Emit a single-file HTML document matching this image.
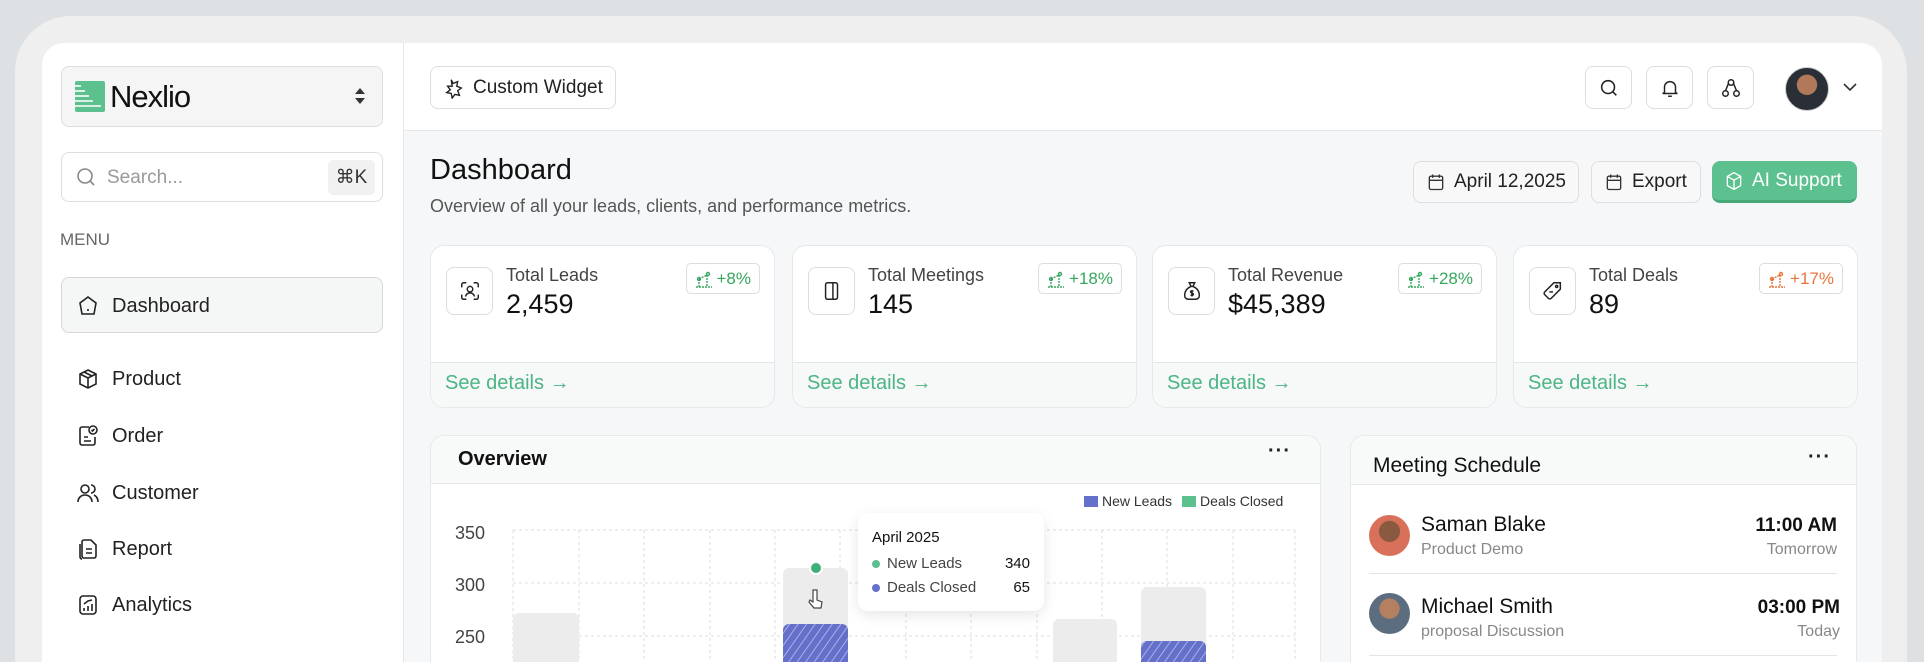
<!DOCTYPE html>
<html><head><meta charset="utf-8">
<style>
*{box-sizing:border-box;margin:0;padding:0}
html,body{width:1924px;height:662px;overflow:hidden}
body{background:#dde1e4;font-family:"Liberation Sans",Arial,sans-serif;color:#1a1a1a}
#w{position:relative;width:1924px;height:662px;overflow:hidden}
.a{position:absolute}
.frame{left:15px;top:16px;width:1892px;height:646px;background:#efefef;border-radius:56px 56px 0 0}
.panel{left:42px;top:43px;width:1840px;height:619px;background:#f6f7f8;border-radius:22px 22px 0 0;overflow:hidden}
.side{left:42px;top:43px;width:362px;height:619px;background:#fff;border-right:1px solid #e6e6e6;border-top-left-radius:22px}
.top{left:404px;top:43px;width:1478px;height:88px;background:#fff;border-bottom:1px solid #e8e8e8;border-top-right-radius:22px}
.box{border:1px solid #dedede;border-radius:8px;background:#fff}
.nav{left:76px;font-size:20px;color:#222;display:flex;align-items:center;gap:12px}
.nav svg{width:24px;height:24px}
.card{background:#fff;border:1px solid #e8e8e8;border-bottom:none;border-radius:14px 14px 0 0}
.ib{width:47px;height:43px;display:flex;align-items:center;justify-content:center}
.btn{height:42px;display:flex;align-items:center;gap:8px;padding:0 12px;font-size:19px;color:#222}
.stat{top:245px;width:345px;height:163px;background:#fff;border:1px solid #e8e8e8;border-radius:14px;overflow:hidden}
.stat .ic{left:15px;top:21px;width:47px;height:48px;border:1px solid #ddd;border-radius:8px;display:flex;align-items:center;justify-content:center}
.stat .t{left:75px;top:19px;font-size:18px;color:#444}
.stat .v{left:75px;top:43px;font-size:27px;color:#111}
.stat .bd{right:14px;top:17px;height:31px;padding:0 8px;border:1px solid #ddd;border-radius:5px;font-size:17px;display:flex;align-items:center;gap:4px}
.stat .ft{left:0;top:116px;width:100%;height:47px;background:#f7f8f8;border-top:1px solid #e6e6e6;color:#4bb585;font-size:20px;padding:9px 14px}
.g{color:#37a65f}.o{color:#e8743b}
</style></head><body><div id="w">
<div class="a frame"></div>
<div class="a panel"></div>
<div class="a side"></div>
<div class="a top"></div>

<div class="a box" style="left:61px;top:66px;width:322px;height:61px;background:#f5f5f5"></div>
<svg class="a" style="left:75px;top:81px" width="30" height="31" viewBox="0 0 30 31"><rect width="30" height="31" rx="2" fill="#5cc08f"/><g stroke="#fff" stroke-width="1.6"><line x1="0" y1="5" x2="6" y2="5"/><line x1="0" y1="10" x2="10" y2="10"/><line x1="0" y1="15" x2="14" y2="15"/><line x1="0" y1="20" x2="18" y2="20"/><line x1="0" y1="25" x2="26" y2="25"/></g></svg>
<div class="a" style="left:110px;top:79px;font-size:31px;letter-spacing:-1px;color:#111">Nexlio</div>
<svg class="a" style="left:354px;top:87px" width="12" height="18" viewBox="0 0 12 18"><path d="M6 1L11 7H1z M6 17L11 11H1z" fill="#333"/></svg>

<div class="a box" style="left:61px;top:152px;width:322px;height:50px"></div>
<svg class="a" style="left:76px;top:167px" width="20" height="20" viewBox="0 0 20 20" fill="none" stroke="#888" stroke-width="1.6"><circle cx="9" cy="9" r="7"/><path d="M14 14l4 4"/></svg>
<div class="a" style="left:107px;top:167px;font-size:19px;color:#999">Search...</div>
<div class="a" style="left:328px;top:160px;width:47px;height:35px;background:#f1f1f1;border-radius:5px;font-size:19px;color:#333;display:flex;align-items:center;justify-content:center">⌘K</div>
<div class="a" style="left:60px;top:230px;font-size:17px;color:#666">MENU</div>

<div class="a box" style="left:61px;top:277px;width:322px;height:56px;background:#f5f6f6;border-color:#d8d8d8"></div>
<div class="a nav" style="top:294px"><svg viewBox="0 0 24 24" fill="none" stroke="#222" stroke-width="1.6"><path d="M12 3l8 6-2 11H6L4 9z"/><path d="M11 16h2"/></svg>Dashboard</div>
<div class="a nav" style="top:367px"><svg viewBox="0 0 24 24" fill="none" stroke="#222" stroke-width="1.6"><path d="M12 3l8 4v10l-8 4-8-4V7z"/><path d="M4 7l8 4 8-4M12 11v10M8 5l8 4"/></svg>Product</div>
<div class="a nav" style="top:424px"><svg viewBox="0 0 24 24" fill="none" stroke="#222" stroke-width="1.6"><path d="M13 3H6a2 2 0 00-2 2v14a2 2 0 002 2h11a2 2 0 002-2v-6"/><circle cx="17" cy="6" r="4"/><path d="M15.5 6l1 1 2-2M8 13h4M8 17h7"/></svg>Order</div>
<div class="a nav" style="top:481px"><svg viewBox="0 0 24 24" fill="none" stroke="#222" stroke-width="1.6"><circle cx="9" cy="8" r="4"/><path d="M2 21c0-4 3-7 7-7s7 3 7 7M15 4a4 4 0 010 8M18 14c2 1 4 3 4 7"/></svg>Customer</div>
<div class="a nav" style="top:537px"><svg viewBox="0 0 24 24" fill="none" stroke="#222" stroke-width="1.6"><path d="M8 3h7l5 5v11a2 2 0 01-2 2H8a2 2 0 01-2-2V5a2 2 0 012-2z"/><path d="M4 7v13a2 2 0 002 2M10 12h6M10 16h6"/></svg>Report</div>
<div class="a nav" style="top:593px"><svg viewBox="0 0 24 24" fill="none" stroke="#222" stroke-width="1.6"><rect x="4" y="3" width="16" height="18" rx="3"/><path d="M8 18v-3M12 18v-5M16 18v-7M8 11l4-3 4-1"/></svg>Analytics</div>

<div class="a box btn" style="left:430px;top:66px;height:43px;width:186px"><svg width="22" height="22" viewBox="0 0 24 24" fill="none" stroke="#222" stroke-width="1.5"><path d="M9 3l2 4 5-2-1 5 5 2-4 3 2 5-5-1-3 4-1-5-5-1 4-3-3-4 5 0z"/></svg>Custom Widget</div>
<div class="a box ib" style="left:1585px;top:66px"><svg width="22" height="22" viewBox="0 0 24 24" fill="none" stroke="#222" stroke-width="1.7"><circle cx="11" cy="11" r="7"/><path d="M16 16l4 4"/></svg></div>
<div class="a box ib" style="left:1646px;top:66px"><svg width="22" height="22" viewBox="0 0 24 24" fill="none" stroke="#222" stroke-width="1.6"><path d="M6 17V11a6 6 0 0112 0v6l2 1H4z"/><path d="M10 21h4"/></svg></div>
<div class="a box ib" style="left:1707px;top:66px"><svg width="22" height="22" viewBox="0 0 24 24" fill="none" stroke="#222" stroke-width="1.6"><circle cx="12" cy="6" r="3"/><circle cx="6" cy="18" r="3"/><circle cx="18" cy="18" r="3"/><path d="M9.5 6.5L6 15M14.5 6.5L18 15"/></svg></div>
<div class="a" style="left:1785px;top:67px;width:44px;height:44px;border-radius:50%;background:radial-gradient(circle at 50% 40%,#b07a5a 0 30%,#2a2e36 32%);border:1px solid #ccc"></div>
<svg class="a" style="left:1842px;top:82px" width="16" height="10" viewBox="0 0 16 10" fill="none" stroke="#333" stroke-width="1.6"><path d="M2 2l6 6 6-6"/></svg>

<div class="a" style="left:430px;top:154px;font-size:29px;color:#111">Dashboard</div>
<div class="a" style="left:430px;top:196px;font-size:18px;color:#555">Overview of all your leads, clients, and performance metrics.</div>
<div class="a box btn" style="left:1413px;top:161px;width:166px;background:#f8f8f8"><svg width="20" height="20" viewBox="0 0 24 24" fill="none" stroke="#333" stroke-width="1.6"><rect x="4" y="5" width="16" height="16" rx="2"/><path d="M8 3v4M16 3v4M4 10h16M9 14h.01M12 14h.01M15 14h.01M9 17h.01M12 17h.01"/></svg>April 12,2025</div>
<div class="a box btn" style="left:1591px;top:161px;width:110px;background:#f8f8f8"><svg width="20" height="20" viewBox="0 0 24 24" fill="none" stroke="#333" stroke-width="1.6"><rect x="4" y="5" width="16" height="16" rx="2"/><path d="M8 3v4M16 3v4M4 10h16M9 14h.01M12 14h.01M15 14h.01M9 17h.01M12 17h.01"/></svg>Export</div>
<div class="a btn" style="left:1712px;top:161px;width:145px;background:#5cc08f;border-radius:8px;border-bottom:3px solid #47a878;color:#fff"><svg width="20" height="20" viewBox="0 0 24 24" fill="none" stroke="#fff" stroke-width="1.6"><path d="M12 2l8 4.5v11L12 22l-8-4.5v-11z"/><path d="M4 6.5l8 4.5 8-4.5M12 11v11"/></svg>AI Support</div>

<div class="a stat" style="left:430px"><div class="a ic"><svg width="22" height="22" viewBox="0 0 24 24" fill="none" stroke="#222" stroke-width="1.6"><path d="M3 8V5a2 2 0 012-2h3M16 3h3a2 2 0 012 2v3M21 16v3a2 2 0 01-2 2h-3M8 21H5a2 2 0 01-2-2v-3"/><circle cx="12" cy="10" r="3"/><path d="M7 18c1-3 3-4 5-4s4 1 5 4"/></svg></div><div class="a t">Total Leads</div><div class="a v">2,459</div><div class="a bd g"><svg width="18" height="18" viewBox="0 0 18 18" fill="none" stroke="#37a65f" stroke-width="1.4"><path d="M1 17h16M4 9l8-4M4 9v8M12 5v12" stroke-dasharray="2 1"/><circle cx="4" cy="9" r="1.5"/><circle cx="13" cy="4" r="1.5"/></svg>+8%</div><div class="a ft">See details →</div></div>
<div class="a stat" style="left:792px"><div class="a ic"><svg width="22" height="22" viewBox="0 0 24 24" fill="none" stroke="#222" stroke-width="1.6"><rect x="5" y="3" width="13" height="18" rx="2"/><path d="M13 3v18M10 12h.01"/></svg></div><div class="a t">Total Meetings</div><div class="a v">145</div><div class="a bd g"><svg width="18" height="18" viewBox="0 0 18 18" fill="none" stroke="#37a65f" stroke-width="1.4"><path d="M1 17h16M4 9l8-4M4 9v8M12 5v12" stroke-dasharray="2 1"/><circle cx="4" cy="9" r="1.5"/><circle cx="13" cy="4" r="1.5"/></svg>+18%</div><div class="a ft">See details →</div></div>
<div class="a stat" style="left:1152px"><div class="a ic"><svg width="22" height="22" viewBox="0 0 24 24" fill="none" stroke="#222" stroke-width="1.6"><path d="M9 3h6l-2 4h-2z"/><path d="M11 7c-5 2-7 6-7 10a4 4 0 004 4h8a4 4 0 004-4c0-4-2-8-7-10"/><path d="M13.5 12.5c-.5-1-3-1-3 .5s3 1 3 2.5-2.5 1.5-3 .5M12 11v7"/></svg></div><div class="a t">Total Revenue</div><div class="a v">$45,389</div><div class="a bd g"><svg width="18" height="18" viewBox="0 0 18 18" fill="none" stroke="#37a65f" stroke-width="1.4"><path d="M1 17h16M4 9l8-4M4 9v8M12 5v12" stroke-dasharray="2 1"/><circle cx="4" cy="9" r="1.5"/><circle cx="13" cy="4" r="1.5"/></svg>+28%</div><div class="a ft">See details →</div></div>
<div class="a stat" style="left:1513px"><div class="a ic"><svg width="22" height="22" viewBox="0 0 24 24" fill="none" stroke="#222" stroke-width="1.6"><path d="M13 3h7v7L10 20a2 2 0 01-3 0l-4-4a2 2 0 010-3z"/><circle cx="16" cy="7" r="1.2"/><path d="M8 13l4 0"/></svg></div><div class="a t">Total Deals</div><div class="a v">89</div><div class="a bd o"><svg width="18" height="18" viewBox="0 0 18 18" fill="none" stroke="#e8743b" stroke-width="1.4"><path d="M1 17h16M4 9l8-4M4 9v8M12 5v12" stroke-dasharray="2 1"/><circle cx="4" cy="9" r="1.5"/><circle cx="13" cy="4" r="1.5"/></svg>+17%</div><div class="a ft">See details →</div></div>

<div class="a card" style="left:430px;top:435px;width:891px;height:227px;overflow:hidden">
 <div style="height:48px;background:#f8f9f9;border-bottom:1px solid #e8e8e8"></div>
</div>
<div class="a" style="left:458px;top:448px;font-size:20px;font-weight:bold;color:#111">Overview</div>
<div class="a" style="left:1268px;top:440px;font-size:20px;letter-spacing:1px;color:#222;font-weight:bold">···</div>
<div class="a" style="left:1084px;top:493px;font-size:14px;color:#333;display:flex;align-items:center;gap:4px"><span style="width:14px;height:11px;background:#6470c9;display:inline-block"></span>New Leads<span style="width:14px;height:11px;background:#5cc08f;display:inline-block;margin-left:6px"></span>Deals Closed</div>
<svg class="a" style="left:440px;top:500px" width="870" height="162">
 <defs><pattern id="h" width="7" height="7" patternUnits="userSpaceOnUse" patternTransform="rotate(35)"><rect width="7" height="7" fill="#6470c9"/><line x1="0" y1="0" x2="0" y2="7" stroke="#aab0e6" stroke-width="2"/></pattern></defs>
 <g stroke="#dcdcdc" stroke-dasharray="3 3">
  <line x1="73" y1="30" x2="855" y2="30"/><line x1="73" y1="83" x2="855" y2="83"/><line x1="73" y1="136" x2="855" y2="136"/>
  <line x1="73" y1="30" x2="73" y2="170"/><line x1="139" y1="30" x2="139" y2="170"/><line x1="204" y1="30" x2="204" y2="170"/><line x1="270" y1="30" x2="270" y2="170"/><line x1="335" y1="30" x2="335" y2="170"/><line x1="400" y1="30" x2="400" y2="170"/><line x1="466" y1="30" x2="466" y2="170"/><line x1="531" y1="30" x2="531" y2="170"/><line x1="597" y1="30" x2="597" y2="170"/><line x1="662" y1="30" x2="662" y2="170"/><line x1="727" y1="30" x2="727" y2="170"/><line x1="793" y1="30" x2="793" y2="170"/><line x1="855" y1="30" x2="855" y2="170"/>
 </g>
 <rect x="73" y="113" width="66" height="70" rx="6" fill="#ececec"/>
 <rect x="343" y="68" width="65" height="110" rx="6" fill="#ececec"/>
 <rect x="343" y="124" width="65" height="60" rx="6" fill="url(#h)"/>
 <rect x="613" y="119" width="64" height="60" rx="6" fill="#ececec"/>
 <rect x="701" y="87" width="65" height="90" rx="6" fill="#ececec"/>
 <rect x="701" y="141" width="65" height="40" rx="6" fill="url(#h)"/>
 <circle cx="376" cy="68" r="6" fill="#3fae7a" stroke="#fff" stroke-width="2"/>
 <path d="M373 90v12l-3-2-1 2 5 6h7l1-6-5-2v-10z" fill="#fff" stroke="#444" stroke-width="1.2"/>
</svg>
<div class="a" style="left:455px;top:523px;font-size:18px;color:#444">350</div>
<div class="a" style="left:455px;top:575px;font-size:18px;color:#444">300</div>
<div class="a" style="left:455px;top:627px;font-size:18px;color:#444">250</div>
<div class="a" style="left:858px;top:513px;width:186px;height:98px;background:#fff;border-radius:10px;box-shadow:0 4px 14px rgba(0,0,0,.1)">
 <div class="a" style="left:14px;top:16px;font-size:15px;color:#111">April 2025</div>
 <div class="a" style="left:14px;top:42px;font-size:15px;color:#444;display:flex;align-items:center;gap:7px"><span style="width:8px;height:8px;border-radius:50%;background:#5cc08f"></span>New Leads</div>
 <div class="a" style="right:14px;top:42px;font-size:15px;color:#111">340</div>
 <div class="a" style="left:14px;top:66px;font-size:15px;color:#444;display:flex;align-items:center;gap:7px"><span style="width:8px;height:8px;border-radius:50%;background:#6470c9"></span>Deals Closed</div>
 <div class="a" style="right:14px;top:66px;font-size:15px;color:#111">65</div>
</div>

<div class="a card" style="left:1350px;top:435px;width:507px;height:227px;overflow:hidden">
 <div style="height:49px;background:#f8f9f9;border-bottom:1px solid #e8e8e8"></div>
</div>
<div class="a" style="left:1373px;top:454px;font-size:21px;color:#111">Meeting Schedule</div>
<div class="a" style="left:1808px;top:446px;font-size:20px;letter-spacing:1px;color:#222;font-weight:bold">···</div>
<div class="a" style="left:1369px;top:515px;width:41px;height:41px;border-radius:50%;background:radial-gradient(circle at 50% 40%,#8a5a40 0 32%,#d8705a 34%)"></div>
<div class="a" style="left:1421px;top:513px;font-size:21px;color:#111">Saman Blake</div>
<div class="a" style="left:1421px;top:541px;font-size:16px;color:#888">Product Demo</div>
<div class="a" style="right:87px;top:515px;font-size:19px;font-weight:bold;color:#111">11:00 AM</div>
<div class="a" style="right:87px;top:541px;font-size:16px;color:#888">Tomorrow</div>
<div class="a" style="left:1369px;top:573px;width:468px;height:1px;background:#e4e4e4"></div>
<div class="a" style="left:1369px;top:593px;width:41px;height:41px;border-radius:50%;background:radial-gradient(circle at 50% 38%,#b48060 0 30%,#5d6d80 32%)"></div>
<div class="a" style="left:1421px;top:595px;font-size:21px;color:#111">Michael Smith</div>
<div class="a" style="left:1421px;top:623px;font-size:16px;color:#888">proposal Discussion</div>
<div class="a" style="right:84px;top:597px;font-size:19px;font-weight:bold;color:#111">03:00 PM</div>
<div class="a" style="right:84px;top:623px;font-size:16px;color:#888">Today</div>
<div class="a" style="left:1369px;top:655px;width:468px;height:1px;background:#e4e4e4"></div>
</div></body></html>
